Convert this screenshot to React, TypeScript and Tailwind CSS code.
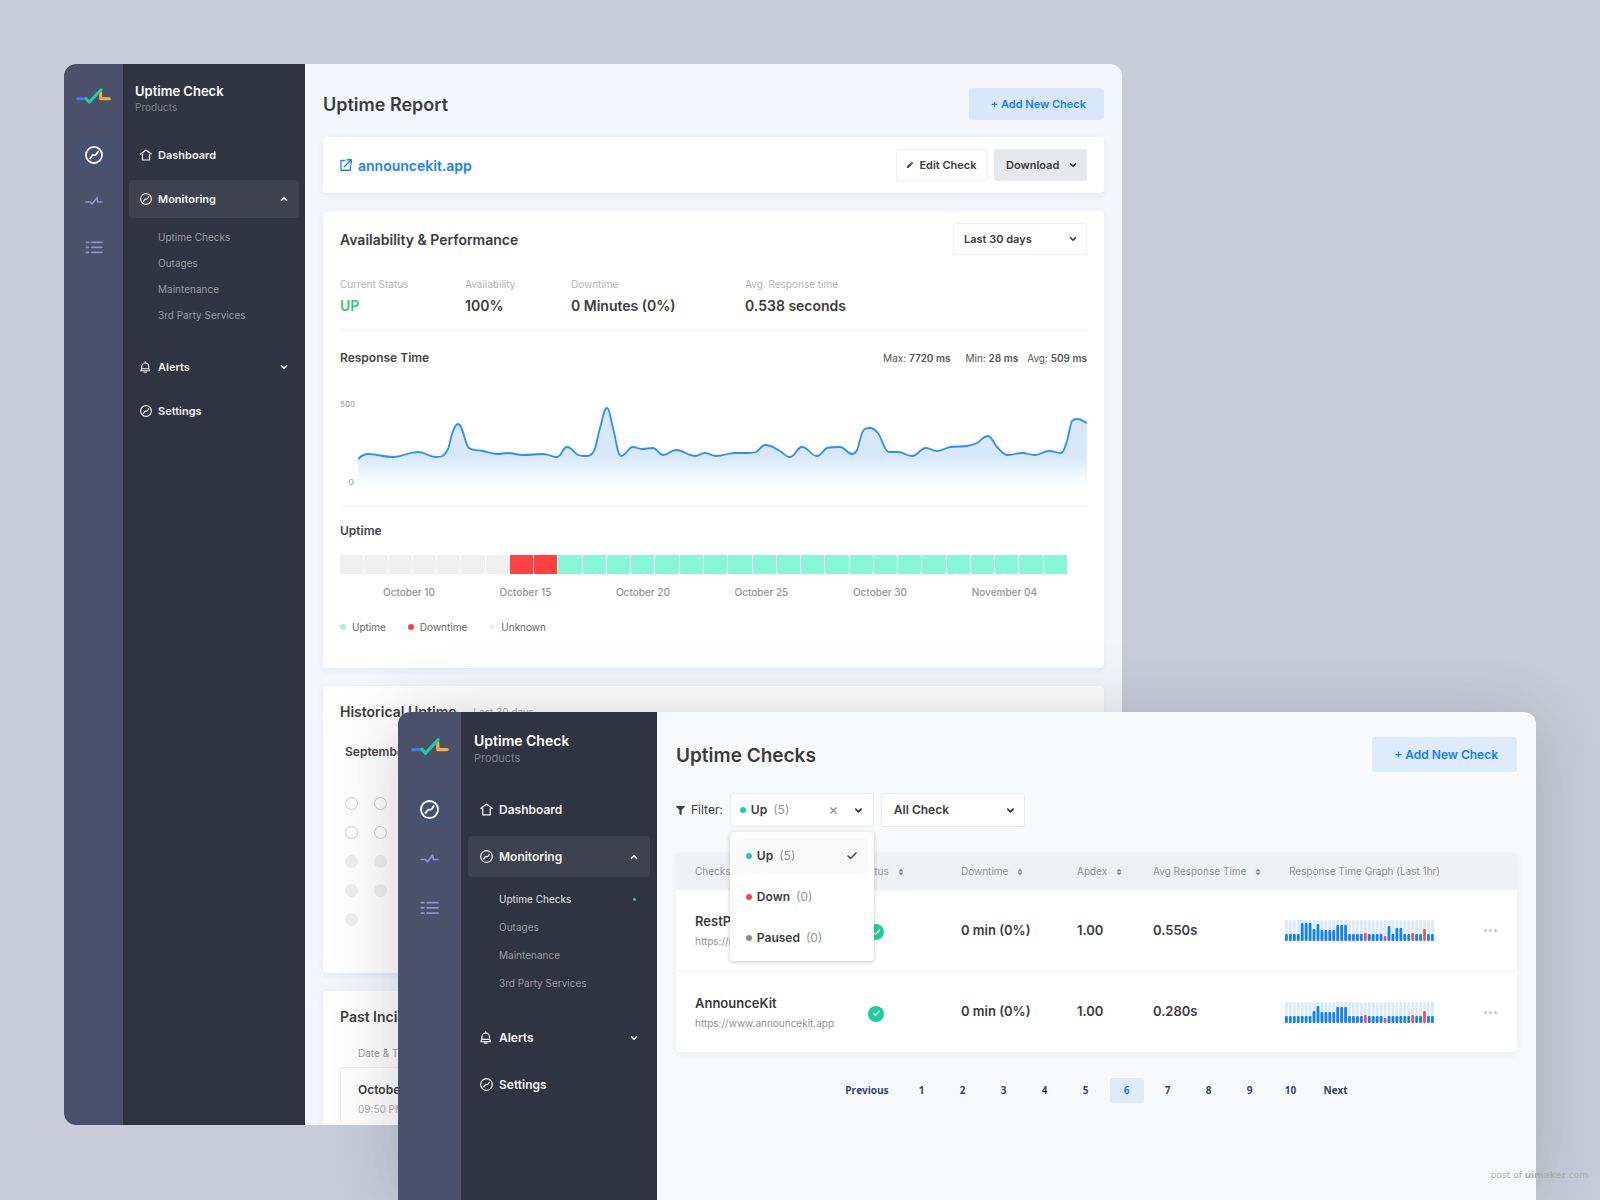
import React, { useState } from 'react';
import clsx from 'clsx';
import { Check, ChevronDown, ChevronUp, X } from 'lucide-react';
import { FaFilter, FaPen, FaSort } from 'react-icons/fa';

type Size = 'sm' | 'lg';

/* ---------- Icons ---------- */

const LogoIcon: React.FC<{ className?: string }> = ({ className }) => (
  <svg viewBox="0 0 105 47" fill="none" strokeWidth="9" strokeLinecap="round" strokeLinejoin="round" className={className}>
    <path d="M5 32h24" stroke="#3b76ff" />
    <path d="M74 14v18h26" stroke="#f9ab35" />
    <path d="M30 31l10 11L75 5" stroke="#1fce9c" />
  </svg>
);

const GaugeIcon: React.FC<{ className?: string }> = ({ className }) => (
  <svg viewBox="0.4 0.4 23.2 23.2" fill="none" stroke="currentColor" strokeWidth="2.2" strokeLinecap="round" strokeLinejoin="round" className={className}>
    <circle cx="12" cy="12" r="10.4" />
    <path d="M7 16.200c1.500-.4 1.800-3.800 3.800-4s3 .6 4-.8l2.400-3.600" />
  </svg>
);

const PulseIcon: React.FC<{ className?: string }> = ({ className }) => (
  <svg viewBox="0 0 54 54" fill="none" stroke="currentColor" strokeWidth="4.500" strokeLinecap="round" strokeLinejoin="round" className={className}>
    <path d="M3 30h13l5 6 15-19 2 13h13" />
  </svg>
);

const ListIcon: React.FC<{ className?: string }> = ({ className }) => (
  <svg viewBox="0 0 54 54" fill="none" stroke="currentColor" strokeWidth="5" strokeLinecap="round" className={className}>
    <path d="M4 13h7M20 13h31M4 28h7M20 28h31M4 43h7M20 43h31" />
  </svg>
);

const HomeIcon: React.FC<{ className?: string }> = ({ className }) => (
  <svg viewBox="0 0 24 24" fill="none" stroke="currentColor" strokeWidth="2.400" strokeLinecap="round" strokeLinejoin="round" className={className}>
    <path d="M1.500 10L12 2l10.500 8" />
    <path d="M5 10.500V22h14V10.500" />
  </svg>
);

const BellIcon: React.FC<{ className?: string }> = ({ className }) => (
  <svg viewBox="0 0 24 24" fill="none" stroke="currentColor" strokeWidth="2.200" strokeLinecap="round" strokeLinejoin="round" className={className}>
    <path d="M3.500 15.500V11a7 7 0 0 1 14 0v4.500" />
    <path d="M1.500 19.500h18l-2-4h-14z" />
    <path d="M10.500 1.500V3M8 22.500h5" />
  </svg>
);

const ExternalIcon: React.FC<{ className?: string }> = ({ className }) => (
  <svg viewBox="0 0 24 24" fill="none" stroke="currentColor" strokeWidth="2.600" strokeLinecap="round" strokeLinejoin="round" className={className}>
    <path d="M9.500 3H2v19.500h19V14" />
    <path d="M14.500 1.500h8V10M22 2L8.500 15.500" />
  </svg>
);

/* ---------- Sidebar ---------- */

const sidebarSizes = {
  sm: {
    rail: 'w-[59px] pt-6',
    logo: 'w-[35px] h-4 mb-[33px]',
    railNav: 'gap-[11px]',
    railItem: 'size-[35px]',
    railIcon: 'size-[18px]',
    panel: 'w-[182px] pt-[18px] px-[6px]',
    header: 'px-[6px] mb-[22px]',
    title: 'text-[13px] leading-[18px]',
    subtitle: 'text-[10px] leading-[14px]',
    row: 'h-[38px] pl-[11px] pr-[10px] text-[11px]',
    icon: 'size-[12px]',
    sub: 'mt-[6px] mb-[14px] pl-[29px] pr-[10px] text-[10px] leading-[26px]',
  },
  lg: {
    rail: 'w-[63px] pt-[26px]',
    logo: 'w-[38px] h-[17px] mb-[35px]',
    railNav: 'gap-[11px]',
    railItem: 'size-[38px]',
    railIcon: 'size-[19px]',
    panel: 'w-[196px] pt-[19px] px-[7px]',
    header: 'px-[6px] mb-[24px]',
    title: 'text-[14px] leading-[20px]',
    subtitle: 'text-[11px] leading-[14px]',
    row: 'h-[41px] pl-[12px] pr-[11px] text-[12px]',
    icon: 'size-[13px]',
    sub: 'mt-[8px] mb-[14px] pl-[31px] pr-[14px] text-[10px] leading-[28px]',
  },
};

const subItems = ['Uptime Checks', 'Outages', 'Maintenance', '3rd Party Services'];

const Sidebar: React.FC<{ size: Size; active?: string }> = ({ size, active }) => {
  const s = sidebarSizes[size];
  const row = clsx('flex w-full items-center gap-[6px] rounded font-semibold text-[#f1f1f4]', s.row);

  return (
    <>
      <div className={clsx('flex shrink-0 flex-col items-center bg-[#4c516b]', s.rail)}>
        <LogoIcon className={s.logo} />
        <nav aria-label="Products" className={clsx('flex flex-col text-[#8b95c9]', s.railNav)}>
          <button aria-label="Checks" className={clsx('flex items-center justify-center rounded bg-[#475170] text-white', s.railItem)}>
            <GaugeIcon className={s.railIcon} />
          </button>
          <button aria-label="Activity" className={clsx('flex items-center justify-center', s.railItem)}>
            <PulseIcon className={s.railIcon} />
          </button>
          <button aria-label="Lists" className={clsx('flex items-center justify-center', s.railItem)}>
            <ListIcon className={s.railIcon} />
          </button>
        </nav>
      </div>

      <div className={clsx('shrink-0 bg-[#303341]', s.panel)}>
        <div className={s.header}>
          <div className={clsx('font-semibold text-white', s.title)}>Uptime Check</div>
          <div className={clsx('text-[#7f818b]', s.subtitle)}>Products</div>
        </div>
        <nav aria-label="Main" className="flex flex-col gap-[6px]">
          <a href="#dashboard" className={row}>
            <HomeIcon className={s.icon} />
            Dashboard
          </a>
          <div>
            <button className={clsx(row, 'bg-[#3f424e]')}>
              <GaugeIcon className={s.icon} />
              <span className="flex-1 text-left">Monitoring</span>
              <ChevronUp className="size-[10px]" strokeWidth={4} />
            </button>
            <ul className={s.sub}>
              {subItems.map(item => (
                <li key={item}>
                  <a
                    href="#monitoring"
                    className={clsx('flex items-center justify-between', item === active ? 'text-[#e2e3e8]' : 'text-[#9a9ca5]')}
                  >
                    {item}
                    {item === active && <span className="size-[3px] rounded-full bg-[#1fce9c]" />}
                  </a>
                </li>
              ))}
            </ul>
          </div>
          <button className={row}>
            <BellIcon className={s.icon} />
            <span className="flex-1 text-left">Alerts</span>
            <ChevronDown className="size-[10px]" strokeWidth={4} />
          </button>
          <a href="#settings" className={row}>
            <GaugeIcon className={s.icon} />
            Settings
          </a>
        </nav>
      </div>
    </>
  );
};

/* ---------- Response time chart ---------- */

const responsePoints: [number, number][] = [
  [0, 59], [10, 54], [35, 57], [60, 52], [78, 57], [90, 49], [94, 34], [100, 24], [111, 48], [125, 51],
  [139, 54], [150, 53], [165, 55], [185, 54], [199, 57], [209, 47], [220, 55], [227, 56], [236, 51], [242, 28],
  [249, 8], [255, 28], [263, 56], [275, 47], [284, 49], [295, 48], [305, 55], [318, 50], [337, 56], [347, 53],
  [358, 56], [377, 53], [389, 53], [398, 52], [407, 45], [422, 51], [432, 57], [444, 47], [459, 56], [469, 48],
  [482, 47], [494, 54], [499, 50], [505, 31], [512, 28], [520, 33], [531, 52], [540, 52], [554, 56], [568, 48],
  [579, 51], [592, 47], [609, 46], [619, 43], [630, 36], [639, 47], [650, 55], [664, 53], [677, 55], [691, 51],
  [703, 53], [709, 41], [714, 21], [719, 19], [729, 23],
];

// Monotone cubic through the points, flat at every peak and dip
const smoothPath = (pts: [number, number][]) => {
  const slope = (i: number) => (pts[i + 1][1] - pts[i][1]) / (pts[i + 1][0] - pts[i][0]);
  const tangents = pts.map((_, i) => {
    if (i === 0) return slope(0) * 2;
    if (i === pts.length - 1) return slope(i - 1);
    const a = slope(i - 1);
    const b = slope(i);
    if (a * b <= 0) return 0;
    const limit = 3 * Math.min(Math.abs(a), Math.abs(b));
    return Math.sign(a) * Math.min(Math.abs(a + b) / 2, limit);
  });
  let d = `M${pts[0][0]} ${pts[0][1]}`;
  for (let i = 0; i < pts.length - 1; i++) {
    const [x0, y0] = pts[i];
    const [x1, y1] = pts[i + 1];
    const h = (x1 - x0) / 3;
    // wider handles at flat ends keep the peaks round
    const h0 = tangents[i] === 0 ? h * 1.3 : h;
    const h1 = tangents[i + 1] === 0 ? h * 1.3 : h;
    d += `C${x0 + h0} ${y0 + tangents[i] * h0} ${x1 - h1} ${y1 - tangents[i + 1] * h1} ${x1} ${y1}`;
  }
  return d;
};

const ResponseChart = () => {
  const line = smoothPath(responsePoints);
  return (
    <div className="flex gap-1">
      <div className="flex h-[86px] w-[14px] shrink-0 flex-col justify-between text-right text-[8px] leading-2 font-medium text-[#a5a5a5]">
        <span>500</span>
        <span>0</span>
      </div>
      <svg viewBox="0 0 729 86" preserveAspectRatio="none" role="img" aria-label="Response time" className="h-[86px] min-w-0 flex-1">
        <defs>
          <linearGradient id="area" gradientUnits="userSpaceOnUse" x1="0" y1="0" x2="0" y2="86">
            <stop offset="0.65" stopColor="#d8e8fd" />
            <stop offset="0.83" stopColor="#e9f6fe" />
            <stop offset="1" stopColor="#ffffff" />
          </linearGradient>
        </defs>
        <path d={`${line}V86H0Z`} fill="url(#area)" />
        <path d={line} fill="none" stroke="#2b8fff" strokeWidth="1.800" />
      </svg>
    </div>
  );
};

/* ---------- Uptime report window ---------- */

const card = 'rounded bg-white px-[17px] shadow-[0_2px_6px_rgba(50,60,90,0.07)]';

const stats = [
  { label: 'Current Status', value: 'UP', width: 'w-[125px]', color: 'text-[#2fcc71]' },
  { label: 'Availability', value: '100%', width: 'w-[106px]', color: 'text-[#3c3c3c]' },
  { label: 'Downtime', value: '0 Minutes (0%)', width: 'w-[174px]', color: 'text-[#3c3c3c]' },
  { label: 'Avg. Response time', value: '0.538 seconds', width: 'w-[160px]', color: 'text-[#3c3c3c]' },
];

const uptimeDays = Array.from({ length: 30 }, (_, i) => (i < 7 ? 'unknown' : i < 9 ? 'down' : 'up'));

const dayColors: Record<string, string> = {
  unknown: 'bg-[#f0f0f0]',
  down: 'bg-[#ff4141]',
  up: 'bg-[#87f7d6]',
};

const legend = [
  { label: 'Uptime', color: 'bg-[#a9f3cf]' },
  { label: 'Downtime', color: 'bg-[#ff4141]' },
  { label: 'Unknown', color: 'bg-[#efefef]' },
];

const ReportWindow = () => (
  <section className="absolute top-16 right-[478px] bottom-[75px] left-16 flex overflow-hidden rounded-xl bg-[#f3f7fc]">
    <Sidebar size="sm" />
    <main className="flex min-w-0 flex-1 flex-col gap-[18px] px-[18px] pt-6">
      <header className="-mb-px flex items-center justify-between">
        <h1 className="text-[18px] font-semibold text-[#3c3c3c]">Uptime Report</h1>
        <button className="h-8 rounded-[3px] bg-[#dae8fc] pr-[18px] pl-[22px] text-[11px] font-semibold text-[#0f80ff]">
          + Add New Check
        </button>
      </header>

      <div className={clsx(card, 'flex h-14 shrink-0 items-center justify-between')}>
        <a href="#announcekit" className="flex items-center gap-[6px] text-[14px] font-semibold text-[#1482ff]">
          <ExternalIcon className="size-[12px]" />
          announcekit.app
        </a>
        <div className="flex gap-[6px] text-[11px] font-semibold text-[#3c3c3c]">
          <button className="flex h-8 w-[92px] items-center justify-center gap-[6px] rounded-[3px] border border-[#f0f0f2]">
            <FaPen className="size-[6px]" />
            Edit Check
          </button>
          <button className="flex h-8 w-[93px] items-center justify-between rounded-[3px] bg-[#e7e8eb] pr-[9px] pl-3">
            Download
            <ChevronDown className="size-[10px]" strokeWidth={4} />
          </button>
        </div>
      </div>

      <div className={clsx(card, 'shrink-0 pt-3 pb-[34px]')}>
        <div className="flex items-center justify-between">
          <h2 className="text-[14px] font-semibold text-[#3c3c3c]">Availability &amp; Performance</h2>
          <div className="relative text-[#3c3c3c]">
            <select
              aria-label="Period"
              className="h-8 w-[134px] appearance-none rounded-[3px] border border-[#f0f0f2] bg-white px-[10px] text-[11px] font-semibold"
            >
              <option>Last 30 days</option>
            </select>
            <ChevronDown className="pointer-events-none absolute top-[11px] right-[9px] size-[10px]" strokeWidth={4} />
          </div>
        </div>

        <dl className="mt-[22px] flex border-b border-[#f3f3f3] pb-[14px]">
          {stats.map(stat => (
            <div key={stat.label} className={stat.width}>
              <dt className="text-[10px] leading-[14px] text-[#b3b3b3]">{stat.label}</dt>
              <dd className={clsx('mt-[5px] text-[14px] leading-5 font-semibold', stat.color)}>{stat.value}</dd>
            </div>
          ))}
        </dl>

        <div className="mt-[18px] flex items-center text-[10px] text-[#555]">
          <h3 className="flex-1 text-[12px] leading-[18px] font-semibold text-[#444]">Response Time</h3>
          <span className="mr-[15px]">Max: <b className="font-semibold">7720 ms</b></span>
          <span className="mr-[9px]">Min: <b className="font-semibold">28 ms</b></span>
          <span>Avg: <b className="font-semibold">509 ms</b></span>
        </div>
        <div className="mt-[33px] border-b-2 border-[#f5f5f5] pb-[19px]">
          <ResponseChart />
        </div>

        <h3 className="mt-[15px] text-[12px] leading-[18px] font-semibold text-[#444]">Uptime</h3>
        <div className="mt-[15px] mr-[20px] grid grid-cols-[repeat(30,1fr)] gap-px">
          {uptimeDays.map((status, i) => (
            <div key={i} className={clsx('h-[19px]', dayColors[status])} />
          ))}
        </div>
        <div className="mt-[11px] mr-[50px] ml-[43px] flex justify-between text-[10px] leading-[14px] font-medium text-[#949494]">
          <span>October 10</span>
          <span>October 15</span>
          <span>October 20</span>
          <span>October 25</span>
          <span>October 30</span>
          <span>November 04</span>
        </div>
        <ul className="mt-[21px] flex gap-[22px] text-[10px] leading-[14px] text-[#666]">
          {legend.map(item => (
            <li key={item.label} className="flex items-center gap-[6px]">
              <span className={clsx('size-[6px] rounded-full', item.color)} />
              {item.label}
            </li>
          ))}
        </ul>
      </div>

      <div className={clsx(card, 'shrink-0 pt-4 pb-[47px]')}>
        <div className="flex items-center gap-1">
          <h2 className="text-[14px] leading-5 font-semibold text-[#3c3c3c]">Historical Uptime</h2>
          <span className="text-[10px] text-[#a8a8a8]">— Last 30 days</span>
        </div>
        <h3 className="mt-[21px] ml-[5px] text-[12px] leading-[18px] font-semibold text-[#444]">September</h3>
        <div className="mt-[36px] ml-[5px] grid w-max grid-cols-7 gap-4">
          {Array.from({ length: 29 }, (_, i) => (
            <span
              key={i}
              className={clsx('size-[13px] rounded-full', i < 14 ? 'border border-[#cfcfcf]' : 'bg-[#efefef]')}
            />
          ))}
        </div>
      </div>

      <div className={clsx(card, 'shrink-0 pt-4')}>
        <h2 className="text-[14px] leading-5 font-semibold text-[#3c3c3c]">Past Incidents</h2>
        <div className="mt-[19px] ml-[18px] text-[10px] leading-[14px] text-[#9a9a9a]">Date &amp; Time</div>
        <div className="mt-[7px] rounded-t border border-[#f1f1f1] px-[17px] pt-[13px] pb-10">
          <div className="text-[12px] leading-[18px] font-semibold text-[#3c3c3c]">October 17</div>
          <div className="mt-[3px] text-[10px] leading-[14px] text-[#adb0b8]">09:50 PM</div>
        </div>
      </div>
    </main>
  </section>
);

/* ---------- Uptime checks window ---------- */

// Bar heights of the last hour, negative ones are failed requests
const restpackBars = [
  7, 7, 7, 7, 18, 18, 18, 12, 17, 11, 11, 11, 11, 16, 16, 16, 7, 7, 7, 7, -8, 7, 7, 7, 7, -5, 15, 7, 13, 13, 7, 7,
  -8, 7, 7, -12, 7, 7,
];
const announcekitBars = [
  7, 7, 7, 7, 7, 7, 7, 12, 17, 11, 11, 11, 11, 16, 16, 16, 7, 7, 7, 7, -8, 7, 7, 7, 7, -5, 7, 7, 7, 7, 7, 7, -8, 7,
  7, -12, 7, 7,
];

const checks = [
  { name: 'RestPack', url: 'https://restpack.io', downtime: '0 min (0%)', apdex: '1.00', avg: '0.550s', bars: restpackBars },
  { name: 'AnnounceKit', url: 'https://www.announcekit.app', downtime: '0 min (0%)', apdex: '1.00', avg: '0.280s', bars: announcekitBars },
];

const filterOptions = [
  { label: 'Up', count: 5, color: 'bg-[#1fce9c]' },
  { label: 'Down', count: 0, color: 'bg-[#ff4141]' },
  { label: 'Paused', count: 0, color: 'bg-[#8c8c8c]' },
];

const BarGraph: React.FC<{ bars: number[] }> = ({ bars }) => (
  <svg width="149" height="21" viewBox="0 0 149 21" role="img" aria-label="Response time graph">
    {bars.map((value, i) => (
      <g key={i}>
        <rect x={i * 3.946} y="0" width="2.800" height="21" rx="1" fill="#d9eafe" />
        <rect
          x={i * 3.946}
          y={21 - Math.abs(value)}
          width="2.800"
          height={Math.abs(value)}
          rx="1"
          fill={value < 0 ? '#ff4d4d' : '#1080ff'}
        />
      </g>
    ))}
  </svg>
);

const SortHead: React.FC<{ children: string }> = ({ children }) => (
  <th className="p-0 font-normal">
    <button className="flex items-center gap-2">
      {children}
      <FaSort className="size-[8px] text-[#8a8a8a]" />
    </button>
  </th>
);

const StatusFilter = () => {
  const [selected, setSelected] = useState('Up');
  const [open, setOpen] = useState(true);
  const current = filterOptions.find(option => option.label === selected) ?? filterOptions[0];

  return (
    <div className="relative">
      <div className="flex h-[34px] w-36 items-center rounded-[3px] border border-[#ededf0] bg-white pr-[9px] pl-[9px]">
        <button onClick={() => setOpen(!open)} className="flex flex-1 items-center">
          <span className={clsx('mr-[5px] size-[6px] rounded-full', current.color)} />
          <span className="font-semibold">{current.label}</span>
          <span className="ml-[6px] text-[#949494]">({current.count})</span>
        </button>
        <button aria-label="Clear" className="mr-[14px] text-[#888]">
          <X className="size-[11px]" strokeWidth={2.5} />
        </button>
        <button aria-label="Toggle options" onClick={() => setOpen(!open)}>
          <ChevronDown className="size-[11px]" strokeWidth={4} />
        </button>
      </div>
      {open && (
        <ul className="absolute top-[39px] left-0 z-10 flex w-36 flex-col gap-[6px] rounded bg-white p-[6px] shadow-[0_1px_4px_rgba(0,0,0,0.22)]">
          {filterOptions.map(option => (
            <li key={option.label}>
              <button
                onClick={() => setSelected(option.label)}
                className={clsx('flex h-[35px] w-full items-center rounded-[3px] pr-[10px] pl-[10px]', option.label === selected && 'bg-[#f9f9f9]')}
              >
                <span className={clsx('mr-[5px] size-[6px] rounded-full', option.color)} />
                <span className="font-semibold">{option.label}</span>
                <span className="ml-[6px] flex-1 text-left text-[#949494]">({option.count})</span>
                {option.label === selected && <Check className="size-[12px] text-[#444]" strokeWidth={3} />}
              </button>
            </li>
          ))}
        </ul>
      )}
    </div>
  );
};

const ChecksWindow = () => (
  <section className="absolute top-[712px] right-16 bottom-0 left-[398px] flex overflow-hidden rounded-t-xl bg-[#f8f9fb] shadow-[0_4px_70px_rgba(50,50,60,0.22)]">
    <Sidebar size="lg" active="Uptime Checks" />
    <main className="min-w-0 flex-1 px-[19px] pt-[25px] text-[#3c3c3c]">
      <header className="flex items-end justify-between">
        <h1 className="text-[19px] leading-8 font-semibold">Uptime Checks</h1>
        <button className="h-[35px] rounded-[3px] bg-[#deebfb] pr-[19px] pl-[22px] text-[12px] font-semibold text-[#0f80ff]">
          + Add New Check
        </button>
      </header>

      <div className="mt-[21px] flex items-center text-[12px]">
        <FaFilter className="mr-[6px] size-[9px]" />
        <span className="mr-[7px]">Filter:</span>
        <StatusFilter />
        <div className="relative ml-[7px]">
          <select
            aria-label="Check type"
            className="h-[34px] w-36 appearance-none rounded-[3px] border border-[#ededf0] bg-white px-3 font-semibold"
          >
            <option>All Check</option>
          </select>
          <ChevronDown className="pointer-events-none absolute top-[12px] right-[9px] size-[11px]" strokeWidth={4} />
        </div>
      </div>

      <div className="mt-[26px] overflow-hidden rounded bg-white shadow-[0_2px_6px_rgba(50,60,90,0.07)]">
        <table className="w-full table-fixed text-left">
          <colgroup>
            <col className="w-[183px]" />
            <col className="w-[102px]" />
            <col className="w-[116px]" />
            <col className="w-[76px]" />
            <col className="w-[132px]" />
            <col />
            <col className="w-[37px]" />
          </colgroup>
          <thead className="h-[37px] bg-[#f0f1f5] text-[10px] text-[#939393]">
            <tr>
              <th className="p-0 pl-[19px] font-normal">Checks</th>
              <SortHead>Status</SortHead>
              <SortHead>Downtime</SortHead>
              <SortHead>Apdex</SortHead>
              <SortHead>Avg Response Time</SortHead>
              <th className="p-0 pl-1 font-normal">Response Time Graph (Last 1hr)</th>
              <td />
            </tr>
          </thead>
          <tbody className="divide-y divide-[#f0f0f2] text-[13px] font-semibold">
            {checks.map(check => (
              <tr key={check.name} className="h-[81px]">
                <td className="p-0 pl-[19px]">
                  <div className="leading-[18px]">{check.name}</div>
                  <div className="mt-1 text-[10px] leading-[14px] font-normal text-[#8f8f8f]">{check.url}</div>
                </td>
                <td className="p-0 pt-1 pl-[9px]">
                  <span className="flex size-4 items-center justify-center rounded-full bg-[#1fce9c] text-white">
                    <Check className="size-[9px]" strokeWidth={3} />
                  </span>
                </td>
                <td className="p-0">{check.downtime}</td>
                <td className="p-0">{check.apdex}</td>
                <td className="p-0">{check.avg}</td>
                <td className="p-0 pt-px">
                  <BarGraph bars={check.bars} />
                </td>
                <td className="p-0 pt-px pl-1">
                  <button aria-label="More" className="flex gap-[2px]">
                    <span className="size-[3px] rounded-full bg-[#c4c9d4]" />
                    <span className="size-[3px] rounded-full bg-[#c4c9d4]" />
                    <span className="size-[3px] rounded-full bg-[#c4c9d4]" />
                  </button>
                </td>
              </tr>
            ))}
          </tbody>
        </table>
      </div>

      <nav
        aria-label="Pagination"
        className="mt-[26px] flex justify-center gap-[7px] font-['Open_Sans','Noto_Sans',sans-serif] text-[10px] font-bold text-[#34446f]"
      >
        <button className="mr-[9px]">Previous</button>
        {Array.from({ length: 10 }, (_, i) => i + 1).map(page => (
          <button key={page} className={clsx('h-[25px] w-[34px] rounded-[3px]', page === 6 && 'bg-[#deebfb] text-[#0f80ff]')}>
            {page}
          </button>
        ))}
        <button className="ml-[9px]">Next</button>
      </nav>
    </main>
  </section>
);

export default function App() {
  return (
    <div className="relative h-screen overflow-hidden bg-[#c8cdd9] font-['Inter',sans-serif]">
      <ReportWindow />
      <ChecksWindow />
      <div className="absolute right-3 bottom-[17px] font-['DejaVu_Sans',sans-serif] text-[9px] leading-4 text-[#aeaeb0]">
        post of <b>uimaker</b>.com
      </div>
    </div>
  );
}
